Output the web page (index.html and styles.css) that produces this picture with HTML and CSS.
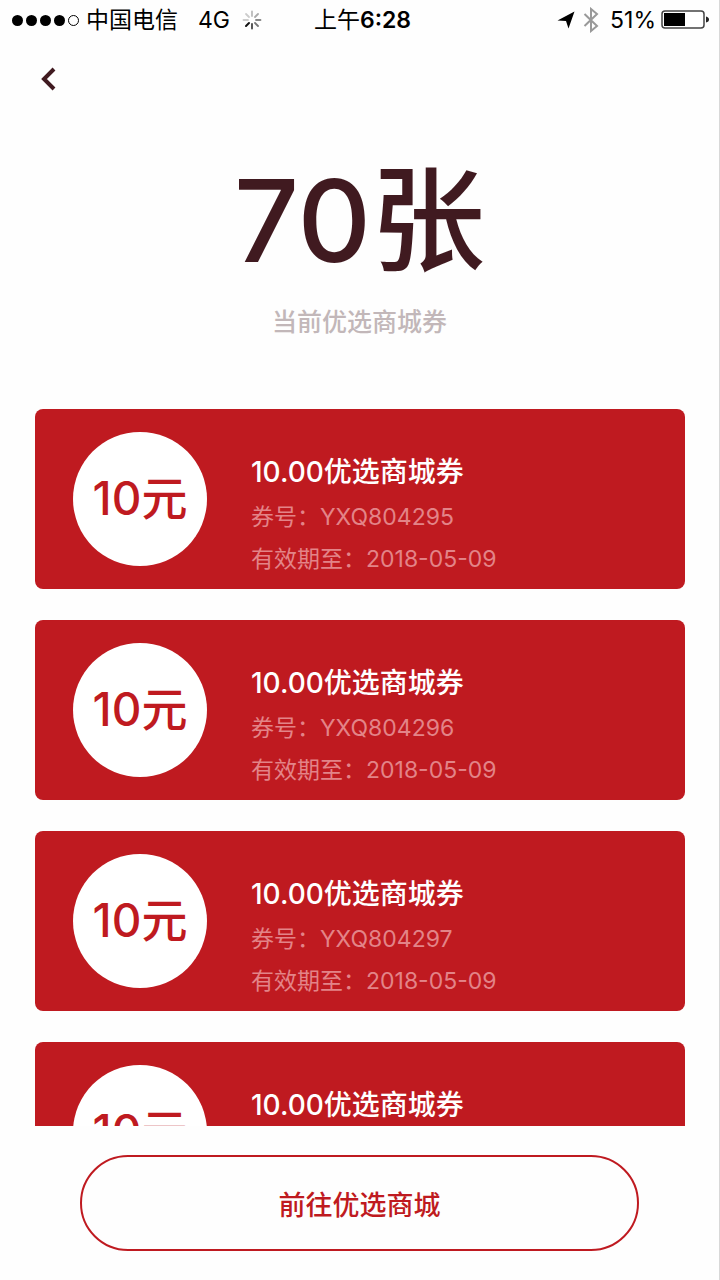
FILE: index.html
```html
<!DOCTYPE html>
<html lang="zh-CN">
<head>
<meta charset="UTF-8">
<meta name="viewport" content="width=device-width, initial-scale=1.0">
<title>优选商城券</title>
<link rel="stylesheet" href="styles.css">
</head>
<body>

<div class="page">
    <div class="status-bar">
        <div class="status-left">
            <div class="signal">
                <i></i><i></i><i></i><i></i><i class="empty"></i>
            </div>
            <span>中国电信</span>
            <span class="network">4G</span>
            <svg class="spinner" width="20" height="20" viewBox="0 0 20 20" fill="none" stroke-width="1.8" stroke-linecap="round">
                <path d="M10 1.5V6" stroke="#bbb"/>
                <path d="M16 4l-3 3" stroke="#aaa"/>
                <path d="M18.500 10H14" stroke="#888"/>
                <path d="M16 16l-3-3" stroke="#777"/>
                <path d="M10 18.500V14" stroke="#444"/>
                <path d="M4 16l3-3" stroke="#111" stroke-width="2"/>
                <path d="M1.500 10H6" stroke="#ccc"/>
                <path d="M4 4l3 3" stroke="#ccc"/>
            </svg>
        </div>
        <div class="status-time">上午<b>6:28</b></div>
        <div class="status-right">
            <svg width="18" height="18" viewBox="0 0 18 18">
                <path d="M17.500 0.500L11.500 17.500L9 10L0.500 9.500Z" fill="#000"/>
            </svg>
            <svg class="bluetooth" width="16" height="26" viewBox="0 0 16 26" fill="none" stroke="#999" stroke-width="2">
                <path d="M1.500 7L14 19L8 24V2L14 7L1.500 19"/>
            </svg>
            <span>51%</span>
            <svg width="48" height="20" viewBox="0 0 48 20">
                <rect x="1" y="1" width="42" height="17" rx="3" fill="#fff" stroke="#444" stroke-width="1.5"/>
                <rect x="3" y="3" width="21" height="13" fill="#000"/>
                <path d="M45 6.500C47 7 48 8 48 9.500S47 12 45 12.500Z" fill="#222"/>
            </svg>
        </div>
    </div>

    <div class="nav">
        <button type="button" class="back" aria-label="返回">
            <svg width="18" height="26" viewBox="0 0 18 26" fill="none" stroke="#401a20" stroke-width="4">
                <path d="M15 3L5 13L15 23"/>
            </svg>
        </button>
    </div>

    <div class="summary">
        <h1>70张</h1>
        <p>当前优选商城券</p>
    </div>

    <div class="coupon-list">
        <div class="coupon">
            <div class="amount">10元</div>
            <div class="info">
                <h2>10.00优选商城券</h2>
                <p>券号：YXQ804295</p>
                <p>有效期至：2018-05-09</p>
            </div>
        </div>
        <div class="coupon">
            <div class="amount">10元</div>
            <div class="info">
                <h2>10.00优选商城券</h2>
                <p>券号：YXQ804296</p>
                <p>有效期至：2018-05-09</p>
            </div>
        </div>
        <div class="coupon">
            <div class="amount">10元</div>
            <div class="info">
                <h2>10.00优选商城券</h2>
                <p>券号：YXQ804297</p>
                <p>有效期至：2018-05-09</p>
            </div>
        </div>
        <div class="coupon">
            <div class="amount">10元</div>
            <div class="info">
                <h2>10.00优选商城券</h2>
            </div>
        </div>
    </div>

    <div class="footer">
        <button type="button" class="go-mall">前往优选商城</button>
    </div>
</div>

</body>
</html>
```
FILE: styles.css
```css
* {
    box-sizing: border-box;
}
body {
    margin: 0;
    background-color: #fefefe;
    font-family: Inter, "Noto Sans CJK SC", sans-serif;
    color: #401a20;
}
h1, h2, p {
    margin: 0;
}
button {
    font-family: inherit;
    background: none;
    cursor: pointer;
}
.page {
    display: flex;
    flex-direction: column;
    height: 100vh;
    border-right: 1px solid #d8d8d8;
}

/* 状态栏 */
.status-bar {
    display: grid;
    grid-template-columns: 1fr auto 1fr;
    align-items: center;
    height: 40px;
    padding: 0 10px 0 12px;
    font-size: 23px;
    line-height: 40px;
    color: #000;
}
.status-left,
.status-right {
    display: flex;
    align-items: center;
}
.status-right {
    justify-content: flex-end;
    gap: 5px;
}
.signal {
    display: flex;
    gap: 3px;
    margin-right: 7px;
}
.signal i {
    width: 11px;
    height: 11px;
    border-radius: 50%;
    background-color: #000;
}
.signal .empty {
    background: none;
    border: 1px solid #000;
}
.network {
    margin: 0 12px 0 20px;
}
.status-time {
    padding-left: 4px;
}
.status-time b {
    font-weight: 600;
}
.bluetooth {
    margin: 0 6px 0 3px;
}

.nav {
    padding: 20px 31px;
}
.back {
    display: block;
    height: 38px;
    padding: 0 8px;
    border: none;
}
.back svg {
    display: block;
}

/* 券总数 */
.summary {
    text-align: center;
    padding: 23px 0 65px;
}
.summary h1 {
    font-size: 114px;
    line-height: 160px;
    font-weight: 500;
}
.summary p {
    font-size: 25px;
    line-height: 43px;
    font-weight: 500;
    color: #c2b7b9;
}

.coupon-list {
    flex: 1;
    min-height: 0;
    overflow: hidden;
    padding: 0 34px 0 35px;
}
.coupon {
    display: flex;
    height: 180px;
    margin-bottom: 31px;
    padding: 23px 38px;
    border-radius: 8px;
    background-color: #bf1a20;
}
.amount {
    flex: none;
    width: 134px;
    height: 134px;
    margin-right: 44px;
    border-radius: 50%;
    background-color: #fff;
    color: #bf1a20;
    font-size: 46px;
    line-height: 132px;
    font-weight: 500;
    text-align: center;
}
.info {
    padding-top: 16px;
    color: #fff;
}
.info h2 {
    font-size: 28px;
    line-height: 48px;
    font-weight: 500;
}
.info p {
    font-size: 23px;
    line-height: 42px;
    color: #e38488;
}

.footer {
    padding: 29px 80px;
}
.go-mall {
    display: block;
    width: 100%;
    height: 96px;
    border: 2px solid #bf1a20;
    border-radius: 48px;
    color: #bf1a20;
    font-size: 27px;
    font-weight: 500;
}
```
